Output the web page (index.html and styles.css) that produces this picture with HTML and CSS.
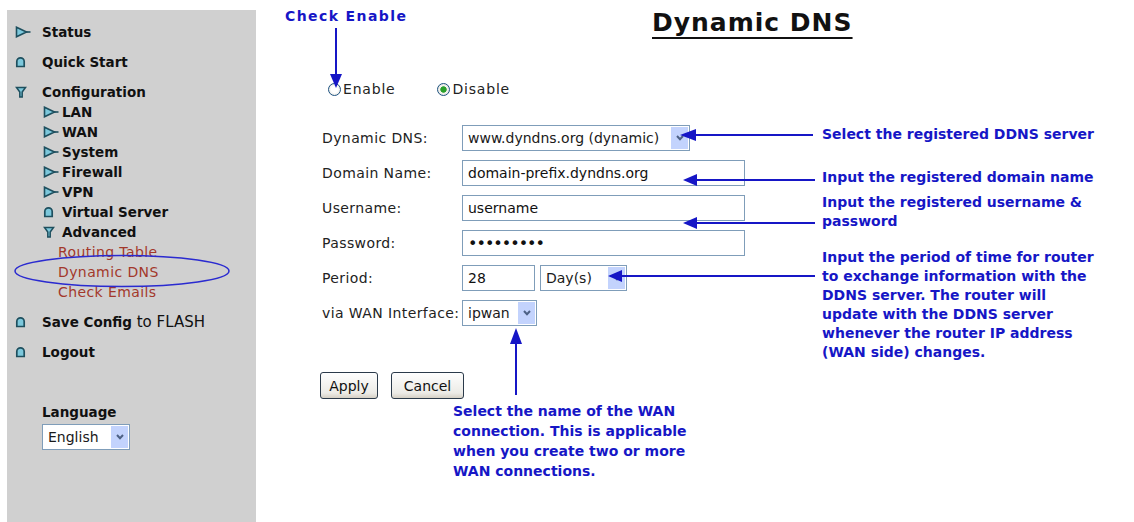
FILE: index.html
```html
<!DOCTYPE html>
<html>
<head>
  <title>Dynamic DNS</title>
  <link rel="stylesheet" href="styles.css">
</head>
<body>
  <svg class="defs" width="0" height="0">
    <symbol id="i-play" viewBox="0 0 16 12">
      <polygon points="1.5,1.2 1.5,10.8 11.5,6" fill="#7cc8dc" stroke="#1e4f5e" stroke-width="1.6"/>
      <line x1="11" y1="6" x2="15.5" y2="6" stroke="#1e4f5e" stroke-width="1.6"/>
    </symbol>
    <symbol id="i-dome" viewBox="0 0 16 12">
      <path d="M1.8,10.5 V5.5 A3.7,3.7 0 0 1 9.2,5.5 V10.5 Z" fill="#7cc8dc" stroke="#1e4f5e" stroke-width="1.7"/>
    </symbol>
    <symbol id="i-open" viewBox="0 0 16 12">
      <path d="M1.5,1.5 H10.5 L7.2,6 V11 H4.8 V6 Z" fill="#7cc8dc" stroke="#1e4f5e" stroke-width="1.5"/>
    </symbol>
    <symbol id="i-down" viewBox="0 0 8 6">
      <polyline points="1,1 4,4.2 7,1" fill="none" stroke="#4d6185" stroke-width="2"/>
    </symbol>
  </svg>

  <div class="page">
    <aside class="sidebar">
      <ul class="menu">
        <li class="menu-top"><svg class="ico"><use href="#i-play"/></svg>Status</li>
        <li class="menu-top gap"><svg class="ico"><use href="#i-dome"/></svg>Quick Start</li>
        <li class="menu-top gap"><svg class="ico"><use href="#i-open"/></svg>Configuration</li>
        <li class="menu-sub"><svg class="ico"><use href="#i-play"/></svg>LAN</li>
        <li class="menu-sub"><svg class="ico"><use href="#i-play"/></svg>WAN</li>
        <li class="menu-sub"><svg class="ico"><use href="#i-play"/></svg>System</li>
        <li class="menu-sub"><svg class="ico"><use href="#i-play"/></svg>Firewall</li>
        <li class="menu-sub"><svg class="ico"><use href="#i-play"/></svg>VPN</li>
        <li class="menu-sub"><svg class="ico"><use href="#i-dome"/></svg>Virtual Server</li>
        <li class="menu-sub"><svg class="ico"><use href="#i-open"/></svg>Advanced</li>
        <li class="menu-link">Routing Table</li>
        <li class="menu-link">Dynamic DNS</li>
        <li class="menu-link">Check Emails</li>
        <li class="menu-top gap"><svg class="ico"><use href="#i-dome"/></svg>Save Config<span class="thin">&nbsp;to FLASH</span></li>
        <li class="menu-top gap"><svg class="ico"><use href="#i-dome"/></svg>Logout</li>
      </ul>
      <div class="lang">
        <div class="lang-title">Language</div>
        <div class="select lang-select">
          <span class="select-value">English</span>
          <span class="select-btn"><svg><use href="#i-down"/></svg></span>
        </div>
      </div>
    </aside>

    <main class="content">
      <h1 class="title">Dynamic DNS</h1>

      <div class="radios">
        <label class="opt"><input type="radio" name="ddns">Enable</label>
        <label class="opt"><input type="radio" name="ddns" checked>Disable</label>
      </div>

      <div class="form">
        <span class="lbl">Dynamic DNS:</span>
        <div class="select sel-ddns">
          <span class="select-value">www.dyndns.org (dynamic)</span>
          <span class="select-btn"><svg><use href="#i-down"/></svg></span>
        </div>

        <span class="lbl">Domain Name:</span>
        <input class="field" type="text" value="domain-prefix.dyndns.org">

        <span class="lbl">Username:</span>
        <input class="field" type="text" value="username">

        <span class="lbl">Password:</span>
        <input class="field pw" type="password" value="123456789">

        <span class="lbl">Period:</span>
        <div class="period">
          <input class="field short" type="text" value="28">
          <div class="select sel-unit">
            <span class="select-value">Day(s)</span>
            <span class="select-btn"><svg><use href="#i-down"/></svg></span>
          </div>
        </div>

        <span class="lbl">via WAN Interface:</span>
        <div class="select sel-wan">
          <span class="select-value">ipwan</span>
          <span class="select-btn"><svg><use href="#i-down"/></svg></span>
        </div>
      </div>

      <div class="actions">
        <button class="btn btn-apply">Apply</button>
        <button class="btn btn-cancel">Cancel</button>
      </div>
    </main>

    <!-- callouts drawn over the screenshot -->
    <svg class="marks" width="1134" height="522">
      <g fill="#1616c6" stroke="#1616c6" stroke-width="2">
        <line x1="336" y1="28" x2="336" y2="76"/>
        <polygon points="330,74 342,74 336,88" stroke="none"/>

        <line x1="813" y1="135" x2="694" y2="135"/>
        <polygon points="680,135 696,129 696,141" stroke="none"/>

        <line x1="815" y1="180" x2="695" y2="180"/>
        <polygon points="683,180 697,174 697,186" stroke="none"/>

        <line x1="815" y1="223" x2="695" y2="223"/>
        <polygon points="683,223 697,217 697,229" stroke="none"/>

        <line x1="815" y1="276" x2="620" y2="276"/>
        <polygon points="608,276 622,270 622,282" stroke="none"/>

        <line x1="516" y1="395" x2="516" y2="342"/>
        <polygon points="516,328 510,344 522,344" stroke="none"/>
      </g>
      <ellipse cx="122" cy="271" rx="107" ry="15.5" fill="none" stroke="#2a2ad0" stroke-width="1.5"/>
    </svg>

    <div class="note note-check">Check Enable</div>
    <div class="note note-server">Select the registered DDNS server</div>
    <div class="note note-domain">Input the registered domain name</div>
    <div class="note note-user">Input the registered username &amp;<br>password</div>
    <div class="note note-period">Input the period of time for router<br>to exchange information with the<br>DDNS server. The router will<br>update with the DDNS server<br>whenever the router IP address<br>(WAN side) changes.</div>
    <div class="note note-wan">Select the name of the WAN<br>connection. This is applicable<br>when you create two or more<br>WAN connections.</div>
  </div>
</body>
</html>
```

FILE: styles.css
```css
body {
  margin: 0;
  background: #fff;
  font-family: "DejaVu Sans", Verdana, sans-serif;
  color: #1a1a1a;
}
.defs {
  position: absolute;
}
.page {
  position: relative;
  display: flex;
  width: 1134px;
  height: 522px;
  overflow: hidden;
}

/* left menu */
.sidebar {
  margin: 10px 0 0 7px;
  width: 249px;
  background: #d0d0d0;
  padding-top: 12px;
  box-sizing: border-box;
}
.menu {
  list-style: none;
  margin: 0;
  padding: 0;
}
.menu li {
  display: flex;
  align-items: center;
  height: 20px;
  white-space: nowrap;
}
.menu-top,
.menu-sub {
  font-size: 13.5px;
  font-weight: bold;
  color: #111;
}
.menu-top {
  padding-left: 8px;
}
.menu-top .ico {
  width: 16px;
  height: 12px;
  margin-right: 11px;
}
.menu-sub {
  padding-left: 36px;
}
.menu-sub .ico {
  width: 16px;
  height: 12px;
  margin-right: 3px;
}
.gap {
  margin-top: 10px;
}
.menu-link {
  padding-left: 51px;
  font-size: 14px;
  letter-spacing: 0.4px;
  color: #a3382b;
}
.thin {
  font-weight: normal;
  font-size: 15px;
}
.lang {
  margin: 40px 0 0 35px;
}
.lang-title {
  font-size: 13.5px;
  font-weight: bold;
  line-height: 20px;
  color: #111;
}
.lang-select {
  width: 88px;
  margin-top: 2px;
}

/* fake select boxes */
.select {
  display: flex;
  align-items: stretch;
  height: 26px;
  box-sizing: border-box;
  border: 1px solid #7f9db9;
  background: #fff;
  font-size: 14px;
}
.select-value {
  flex: 1;
  display: flex;
  align-items: center;
  padding-left: 5px;
  white-space: nowrap;
  overflow: hidden;
}
.select-btn {
  width: 17px;
  margin: 1px;
  background: #c3d3fd;
  display: flex;
  align-items: center;
  justify-content: center;
}
.select-btn svg {
  width: 8px;
  height: 6px;
}

/* main form */
.content {
  flex: 1;
  padding-left: 66px;
}
.title {
  margin: 8px 0 0 330px;
  font-size: 25px;
  line-height: 30px;
  font-weight: bold;
  letter-spacing: 1px;
  color: #111;
  text-decoration: underline;
  text-decoration-thickness: 2px;
  text-underline-offset: 6px;
}
.radios {
  display: flex;
  align-items: center;
  height: 20px;
  margin: 41px 0 0 6px;
  font-size: 14px;
  letter-spacing: 0.8px;
  color: #222;
}
.opt {
  display: flex;
  align-items: center;
}
.opt + .opt {
  margin-left: 41px;
}
.opt input {
  appearance: none;
  width: 13px;
  height: 13px;
  margin: 0 2px 0 0;
  border: 1px solid #1c5180;
  border-radius: 50%;
  background: radial-gradient(circle, #fff 40%, #dcdcd4);
}
.opt input:checked {
  margin-right: 3px;
  background: radial-gradient(circle, #2aa02a 0, #2aa02a 2.8px, #f4f4f0 3.6px, #dcdcd4);
}
.form {
  display: grid;
  grid-template-columns: 140px auto;
  row-gap: 9px;
  align-items: center;
  justify-items: start;
  margin-top: 26px;
}
.lbl {
  font-size: 14px;
  letter-spacing: 0.4px;
  color: #222;
}
.field {
  width: 283px;
  height: 26px;
  box-sizing: border-box;
  margin: 0;
  padding: 0 5px;
  border: 1px solid #7f9db9;
  font-family: inherit;
  font-size: 14px;
  color: #111;
}
.pw {
  font-size: 16px;
  letter-spacing: -1px;
}
.sel-ddns {
  width: 228px;
}
.period {
  display: flex;
  gap: 5px;
}
.field.short {
  width: 73px;
}
.sel-unit {
  width: 87px;
}
.sel-wan {
  width: 75px;
}
.actions {
  display: flex;
  gap: 13px;
  margin: 46px 0 0 -2px;
}
.btn {
  height: 27px;
  padding: 0;
  border: 1px solid #2b3a4a;
  border-radius: 3px;
  background: linear-gradient(#fefefe, #ecebe6 80%, #d6d0c5);
  font-family: inherit;
  font-size: 14px;
  color: #111;
}
.btn-apply {
  width: 58px;
}
.btn-cancel {
  width: 73px;
}

/* callouts */
.marks {
  position: absolute;
  left: 0;
  top: 0;
  pointer-events: none;
}
.note {
  position: absolute;
  color: #1616c6;
  font-weight: bold;
  font-size: 14px;
  line-height: 19px;
  white-space: nowrap;
}
.note-check {
  left: 285px;
  top: 7px;
  letter-spacing: 1.4px;
}
.note-server {
  left: 822px;
  top: 125px;
}
.note-domain {
  left: 822px;
  top: 168px;
}
.note-user {
  left: 822px;
  top: 193px;
}
.note-period {
  left: 822px;
  top: 248px;
}
.note-wan {
  left: 453px;
  top: 401px;
  line-height: 20px;
}
```
